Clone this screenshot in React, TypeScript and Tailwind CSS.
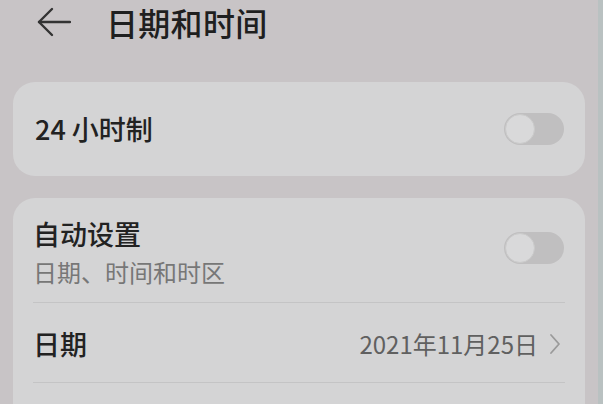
import React from "react";

const cjk = { fontFamily: '"Noto Sans CJK SC", "Noto Sans", sans-serif' };

function Toggle() {
  return (
    <div className="w-[60px] h-[32px] rounded-full bg-[#c0bfc0] flex items-center pl-[1px]">
      <div className="w-[30px] h-[30px] rounded-full bg-[#d9d9da] border border-[#cacaca]" />
    </div>
  );
}

export default function App() {
  return (
    <div className="w-[603px] h-[404px] overflow-hidden flex bg-[#c8c4c6]" style={cjk}>
      <div className="flex-1 flex flex-col">
        {/* Header */}
        <div className="h-[44px] flex items-center">
          <svg className="ml-[37px] w-[34px] h-[30px]" viewBox="0 0 34 30" fill="none" stroke="#333" strokeWidth="2.4" strokeLinecap="round" strokeLinejoin="round">
            <path d="M33 15H2" />
            <path d="M15 2L2 15l13 13" />
          </svg>
          <h1 className="ml-[35px] text-[32px] leading-none font-medium text-[#1f1f1f] tracking-[0.3px]">日期和时间</h1>
        </div>

        {/* Card 1 */}
        <div className="mt-[38px] mx-[13px] h-[94px] rounded-[22px] bg-[#d4d4d5] flex items-center justify-between pl-[22px] pr-[21px]">
          <span className="text-[27px] font-medium text-[#222]">24 小时制</span>
          <Toggle />
        </div>

        {/* Card 2 */}
        <div className="mt-[22px] mx-[13px] flex-1 rounded-t-[22px] bg-[#d4d4d5] px-[20px]">
          <div className="h-[105px] flex items-center justify-between pr-[1px] pt-[4px] border-b border-[#c4c4c5]">
            <div className="flex flex-col">
              <span className="text-[27px] leading-[34px] font-medium text-[#222]">自动设置</span>
              <span className="text-[24px] leading-[30px] text-[#777] mt-[6px]">日期、时间和时区</span>
            </div>
            <div className="-mt-[8px]">
              <Toggle />
            </div>
          </div>
          <div className="h-[80px] flex items-center justify-between pr-[4px] pt-[3px] border-b border-[#c4c4c5]">
            <span className="text-[27px] font-medium text-[#222]">日期</span>
            <div className="flex items-center gap-[11px]">
              <span className="text-[24px] text-[#606060]">2021年11月25日</span>
              <svg className="w-[12px] h-[22px]" viewBox="0 0 12 22" fill="none" stroke="#9a9a9a" strokeWidth="1.8" strokeLinecap="round" strokeLinejoin="round">
                <path d="M2 2l8 9-8 9" />
              </svg>
            </div>
          </div>
        </div>
      </div>
      <div className="w-[5px] bg-[#b9c1c1]" />
    </div>
  );
}
